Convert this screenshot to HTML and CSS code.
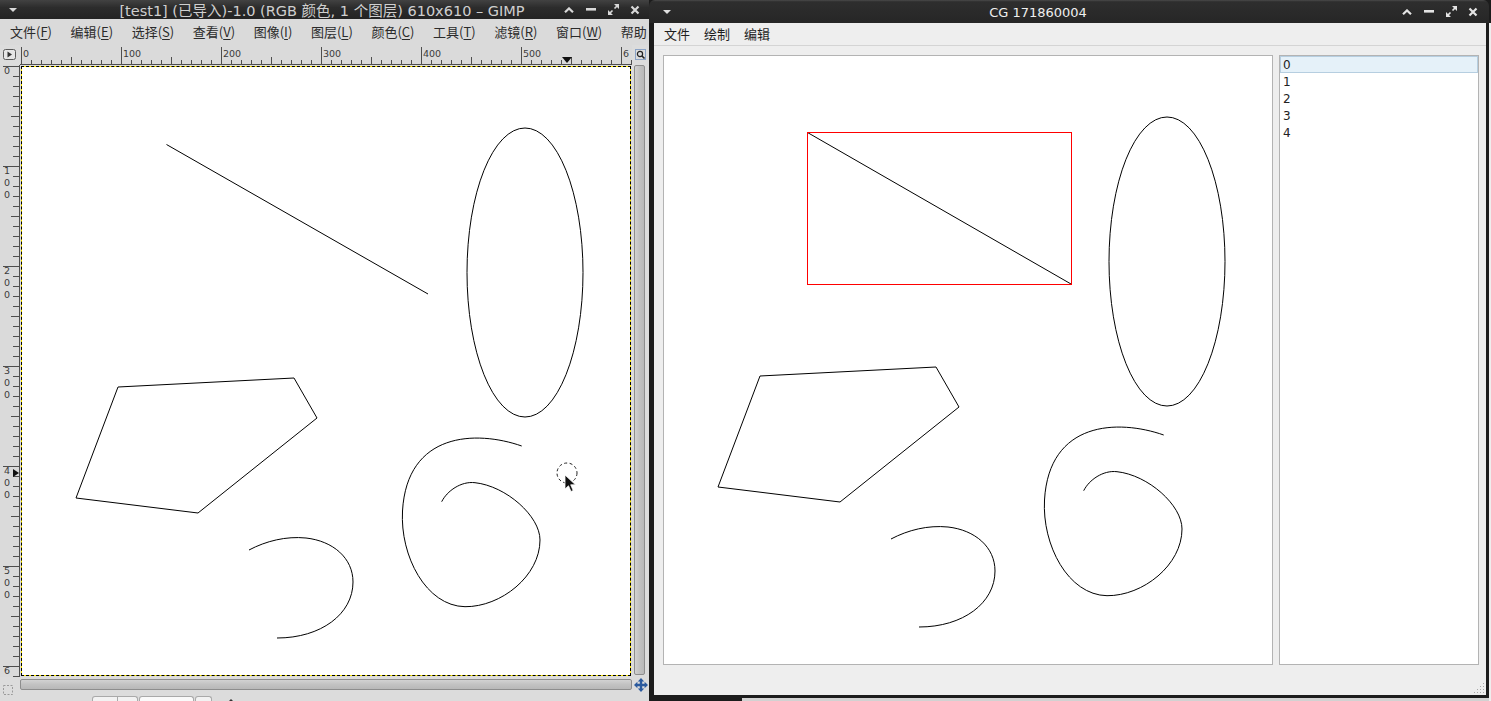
FILE: index.html
```html
<!DOCTYPE html>
<html lang="zh">
<head>
<meta charset="utf-8">
<title>GIMP and CG</title>
<link rel="stylesheet" href="styles.css">
</head>
<body>
<div class="desk-strip"></div>
<div class="desk-edge"></div>

<div class="win gimp">
  <div class="titlebar">
    <div class="tb-menu"><svg width="8" height="4" viewBox="0 0 8 4"><path d="M0 0H8L4 4Z" fill="#d8d8d8"/></svg></div>
    <div class="title">[test1] (已导入)-1.0 (RGB 颜色, 1 个图层) 610x610 – GIMP</div>
    <div class="tb-btns">
      <div class="tb-btn"><svg width="10" height="6" viewBox="0 0 10 6"><path d="M1 5.2 L5 1.4 L9 5.2" stroke="#d8d8d8" stroke-width="2.2" fill="none"/></svg></div>
      <div class="tb-btn"><svg width="10" height="3" viewBox="0 0 10 3"><rect width="10" height="2.6" fill="#d8d8d8"/></svg></div>
      <div class="tb-btn"><svg width="11" height="11" viewBox="0 0 11 11"><path d="M6 0H11V5Z M0 6V11H5Z" fill="#d8d8d8"/><path d="M9.5 1.5L6.5 4.5 M1.5 9.5L4.5 6.5" stroke="#d8d8d8" stroke-width="1.6"/></svg></div>
      <div class="tb-btn"><svg width="10" height="10" viewBox="0 0 10 10"><path d="M1.5 1.5L8.5 8.5M8.5 1.5L1.5 8.5" stroke="#d8d8d8" stroke-width="2.2"/></svg></div>
    </div>
  </div>

  <div class="gmenu">
    <span>文件(<u>F</u>)</span>
    <span>编辑(<u>E</u>)</span>
    <span>选择(<u>S</u>)</span>
    <span>查看(<u>V</u>)</span>
    <span>图像(<u>I</u>)</span>
    <span>图层(<u>L</u>)</span>
    <span>颜色(<u>C</u>)</span>
    <span>工具(<u>T</u>)</span>
    <span>滤镜(<u>R</u>)</span>
    <span>窗口(<u>W</u>)</span>
    <span>帮助</span>
  </div>

  <div class="gmain">
    <div class="corner">
      <svg width="14" height="12" viewBox="0 0 14 12"><rect x="0.5" y="0.5" width="12" height="10" rx="2" fill="#e6e6e6" stroke="#5a5a5a"/><path d="M4.5 2.5 L9 5.5 L4.5 8.5Z" fill="#333"/></svg>
    </div>
    <div class="hruler">
      <span>0</span><span>100</span><span>200</span><span>300</span><span>400</span><span>500</span><span class="last">6</span>
      <i class="hmark"></i>
    </div>
    <div class="zoombtn">
      <svg width="11" height="11" viewBox="0 0 11 11"><rect x="0.5" y="0.5" width="10" height="10" fill="none" stroke="#3b6bb0" stroke-dasharray="1 1"/><circle cx="5" cy="5" r="2.6" fill="none" stroke="#222" stroke-width="1.2"/><path d="M7 7L9.5 9.5" stroke="#222" stroke-width="1.6"/></svg>
    </div>

    <div class="vruler">
      <div class="vl"><b>0</b></div>
      <div class="vl"><b>1</b><b>0</b><b>0</b></div>
      <div class="vl"><b>2</b><b>0</b><b>0</b></div>
      <div class="vl"><b>3</b><b>0</b><b>0</b></div>
      <div class="vl"><b>4</b><b>0</b><b>0</b></div>
      <div class="vl"><b>5</b><b>0</b><b>0</b></div>
      <div class="vl"><b>6</b></div>
      <i class="vmark"></i>
    </div>
    <div class="gcanvas">
      <div class="image">
        <svg width="608" height="608" viewBox="1 1 608 608" class="art">
          <g fill="none" stroke="#000" stroke-width="1">
            <path d="M145.5 78.5 L407 228"/>
            <ellipse cx="504" cy="206.5" rx="58" ry="144.5"/>
            <polygon points="97,321 273,312 296,352 177,447 55,432"/>
            <path d="M500.7 380 C455 364 386 366 381.5 445 C379 490 405 540 444 540.7 C480 541 519 510 519 474 C519 450 485 420 454 416.7 C440 415 426 425 420.7 435.7"/>
            <path d="M228 484 C245 475 265 470 285 472 C312 475 332 492 332 516 C332 548 300 572 256 572"/>
          </g>
          <circle cx="546" cy="407" r="10" fill="none" stroke="#222" stroke-dasharray="3 2.5"/>
          <path d="M544 409 L544 423 L547.5 419.8 L550 425.5 L552.2 424.5 L549.7 418.8 L554.5 418.8 Z" fill="#111" stroke="#fff" stroke-width="0.8"/>
        </svg>
      </div>
    </div>
    <div class="vscroll-cell"><div class="vscroll"></div></div>

    <div class="qmask">
      <svg width="11" height="11" viewBox="0 0 11 11"><rect x="0.5" y="0.5" width="9" height="9" fill="none" stroke="#9a9a9a" stroke-dasharray="2 1.5"/></svg>
    </div>
    <div class="hscroll-cell"><div class="hscroll"></div></div>
    <div class="nav">
      <svg width="14" height="14" viewBox="0 0 14 14"><path d="M7 0 L10.2 3.4 H8.2 V5.8 H10.6 V3.8 L14 7 L10.6 10.2 V8.2 H8.2 V10.6 H10.2 L7 14 L3.8 10.6 H5.8 V8.2 H3.4 V10.2 L0 7 L3.4 3.8 V5.8 H5.8 V3.4 H3.8 Z" fill="#2b5a9e"/></svg>
    </div>
  </div>

  <div class="gstatus">
    <div class="sbtn b1"><span></span></div>
    <div class="sbtn b2"></div>
    <div class="sbtn b3"></div>
    <div class="sarrow"></div>
  </div>
</div>

<div class="win cg">
  <div class="titlebar">
    <div class="tb-menu"><svg width="8" height="4" viewBox="0 0 8 4"><path d="M0 0H8L4 4Z" fill="#e0e0e0"/></svg></div>
    <div class="title">CG 171860004</div>
    <div class="tb-btns">
      <div class="tb-btn"><svg width="10" height="6" viewBox="0 0 10 6"><path d="M1 5.2 L5 1.4 L9 5.2" stroke="#e4e4e4" stroke-width="2.2" fill="none"/></svg></div>
      <div class="tb-btn"><svg width="10" height="3" viewBox="0 0 10 3"><rect width="10" height="2.6" fill="#e4e4e4"/></svg></div>
      <div class="tb-btn"><svg width="11" height="11" viewBox="0 0 11 11"><path d="M6 0H11V5Z M0 6V11H5Z" fill="#e4e4e4"/><path d="M9.5 1.5L6.5 4.5 M1.5 9.5L4.5 6.5" stroke="#e4e4e4" stroke-width="1.6"/></svg></div>
      <div class="tb-btn"><svg width="10" height="10" viewBox="0 0 10 10"><path d="M1.5 1.5L8.5 8.5M8.5 1.5L1.5 8.5" stroke="#e4e4e4" stroke-width="2.2"/></svg></div>
    </div>
  </div>
  <div class="client">
    <div class="cmenu">
      <span>文件</span><span>绘制</span><span>编辑</span>
    </div>
    <div class="cbody">
      <div class="panel cv">
        <svg width="608" height="608" viewBox="1 1 608 608" class="art">
          <g fill="none" stroke="#000" stroke-width="1">
            <path d="M144.5 77.5 L408 229"/>
            <ellipse cx="504" cy="206.5" rx="58" ry="144.5"/>
            <polygon points="97,321 273,312 296,352 177,447 55,432"/>
            <path d="M500.7 380 C455 364 386 366 381.5 445 C379 490 405 540 444 540.7 C480 541 519 510 519 474 C519 450 485 420 454 416.7 C440 415 426 425 420.7 435.7"/>
            <path d="M228 484 C245 475 265 470 285 472 C312 475 332 492 332 516 C332 548 300 572 256 572"/>
          </g>
          <rect x="144.5" y="77.5" width="264" height="152" fill="none" stroke="#ff0000"/>
        </svg>
      </div>
      <div class="panel list">
        <div class="item sel">0</div>
        <div class="item">1</div>
        <div class="item">2</div>
        <div class="item">3</div>
        <div class="item">4</div>
      </div>
    </div>
    <svg class="grip" width="12" height="12" viewBox="0 0 12 12">
      <g fill="#a8a8a8">
        <rect x="10" y="1" width="1" height="1"/>
        <rect x="7" y="4" width="1" height="1"/><rect x="10" y="4" width="1" height="1"/>
        <rect x="4" y="7" width="1" height="1"/><rect x="7" y="7" width="1" height="1"/><rect x="10" y="7" width="1" height="1"/>
        <rect x="1" y="10" width="1" height="1"/><rect x="4" y="10" width="1" height="1"/><rect x="7" y="10" width="1" height="1"/><rect x="10" y="10" width="1" height="1"/>
      </g>
    </svg>
  </div>
</div>
</body>
</html>
```

FILE: styles.css
```css
* { box-sizing: border-box; margin: 0; padding: 0; }
html, body { width: 1491px; height: 701px; overflow: hidden; }
body {
  position: relative;
  background: #1c1c1c;
  font-family: "DejaVu Sans", "Noto Sans CJK SC", sans-serif;
}

.desk-strip { position: absolute; left: 742px; top: 698px; right: 0; bottom: 0; background: #d2d2d2; }
.desk-edge { position: absolute; left: 1489px; top: 23px; right: 0; bottom: 0; background: #eeeeee; }

.win { position: absolute; top: 0; overflow: hidden; }

/* ---------- title bars ---------- */
.titlebar {
  flex: none;
  display: flex;
  align-items: center;
  background: linear-gradient(#424242, #2c2c2c 40%, #232323);
  color: #d4d4d4;
}
.tb-menu { width: 26px; flex: none; display: flex; justify-content: center; align-items: center; }
.title {
  flex: 1;
  text-align: center;
  font-size: 13px;
  white-space: nowrap;
  overflow: hidden;
}
.tb-btns { display: flex; flex: none; }
.tb-btn { width: 22px; display: flex; justify-content: center; align-items: center; }

/* ---------- GIMP window ---------- */
.gimp {
  left: 0;
  width: 649px;
  height: 701px;
  background: #dcdcdc;
  display: flex;
  flex-direction: column;
}
.gimp .titlebar { height: 19px; padding-right: 3px; }
.gimp .title { padding-left: 60px; padding-top: 2px; font-size: 14.5px; line-height: 18px; color: #cfcfcf; }
.gimp .tb-btn { height: 19px; }

.gmenu {
  flex: none;
  height: 26px;
  display: flex;
  padding-left: 0.7px;
  white-space: nowrap;
  overflow: hidden;
  font-family: "Noto Sans CJK SC", sans-serif;
  font-size: 13px;
  line-height: 26px;
  color: #2b2b2b;
  background: #dadada;
}
.gmenu span { flex: none; padding: 0 9.3px; }
.gmenu u { text-underline-offset: 2px; }

.gmain {
  flex: none;
  display: grid;
  grid-template-columns: 20px 612px 17px;
  grid-template-rows: 20px 612px 15px;
}

.corner { display: flex; padding: 4px 0 0 3px; }

.hruler {
  position: relative;
  overflow: hidden;
  display: flex;
  padding: 4px 0 0 3px;
  font-family: "DejaVu Sans", sans-serif;
  font-size: 9.5px;
  line-height: 10px;
  color: #3c3c3c;
  background:
    linear-gradient(#4e4e4e, #4e4e4e) 0 100% / 100% 1px no-repeat,
    repeating-linear-gradient(90deg, #4e4e4e 0 1px, transparent 1px 100px) 1px 2px / 100% 18px no-repeat,
    repeating-linear-gradient(90deg, #4e4e4e 0 1px, transparent 1px 50px) 1px 12px / 100% 7px no-repeat,
    repeating-linear-gradient(90deg, #4e4e4e 0 1px, transparent 1px 10px) 1px 15px / 100% 4px no-repeat,
    #dadada;
}
.hruler span { flex: none; width: 100px; }
.hruler span.last { width: auto; }
.hmark {
  position: absolute;
  left: 542px;
  top: 12px;
  width: 0;
  height: 0;
  border-left: 5.5px solid transparent;
  border-right: 5.5px solid transparent;
  border-top: 6px solid #111;
}

.zoombtn { display: flex; padding: 4px 0 0 3px; }

.vruler {
  position: relative;
  overflow: hidden;
  display: flex;
  flex-direction: column;
  font-family: "DejaVu Sans", sans-serif;
  font-size: 9.5px;
  line-height: 12px;
  color: #3c3c3c;
  background:
    linear-gradient(#4e4e4e, #4e4e4e) 19px 0 / 1px 100% no-repeat,
    repeating-linear-gradient(180deg, #4e4e4e 0 1px, transparent 1px 100px) 3px 1px / 16px 100% no-repeat,
    repeating-linear-gradient(180deg, #4e4e4e 0 1px, transparent 1px 50px) 11px 1px / 8px 100% no-repeat,
    repeating-linear-gradient(180deg, #4e4e4e 0 1px, transparent 1px 10px) 13px 1px / 6px 100% no-repeat,
    #dadada;
}
.vl { flex: none; height: 100px; padding: 0 0 0 4px; display: flex; flex-direction: column; }
.vl:last-of-type { height: auto; }
.vl b { font-weight: normal; display: block; }
.vmark {
  position: absolute;
  left: 13px;
  top: 404px;
  width: 0;
  height: 0;
  border-top: 4.5px solid transparent;
  border-bottom: 4.5px solid transparent;
  border-left: 6px solid #111;
}

.gcanvas { background: #dcdcdc; padding: 1px 0 0 1px; }
.image {
  width: 610px;
  height: 610px;
  border: 1px dashed #000;
  background-color: #ffe900;
}
.art { display: block; background: #fff; }

.vscroll-cell { padding: 0 0 2px 2px; }
.vscroll {
  width: 11px;
  height: 100%;
  border: 1px solid #8d8d8d;
  border-radius: 2px;
  background: linear-gradient(90deg, #d2d2d2, #c2c2c2 50%, #b8b8b8);
}

.qmask { padding: 4px 0 0 3px; }
.hscroll-cell { padding: 2px 0 0 0; }
.hscroll {
  height: 11px;
  border: 1px solid #8d8d8d;
  border-radius: 2px;
  background: linear-gradient(#d2d2d2, #c2c2c2 50%, #b8b8b8);
}
.nav { padding: 0 0 0 2px; }

.gstatus {
  flex: 1;
  display: flex;
  align-items: flex-start;
  padding: 4px 0 0 92px;
}
.sbtn {
  height: 14px;
  border: 1px solid #a9a9a9;
  border-bottom: 0;
  border-radius: 3px 3px 0 0;
  background: #f2f2f2;
}
.b1 { width: 46px; position: relative; }
.b1 span { position: absolute; left: 24px; top: 0; width: 1px; height: 100%; background: #a9a9a9; }
.b2 { width: 55px; margin-left: 1px; background: #fafafa; }
.b3 { width: 17px; margin-left: 1px; }
.sarrow { margin: 3px 0 0 16px; width: 0; height: 0; border-left: 3px solid transparent; border-right: 3px solid transparent; border-bottom: 3px solid #333; }

/* ---------- CG window ---------- */
.cg {
  left: 649px;
  width: 840px;
  height: 698px;
  display: flex;
  flex-direction: column;
  background: #1c1c1c;
  border-radius: 6px 6px 0 0;
}
.cg .titlebar { height: 23px; padding: 0 5px; background: linear-gradient(#4a4a4a, #2e2e2e 8%, #262626); }
.cg .title { padding-top: 2px; color: #efefef; }
.cg .tb-btn { height: 23px; }

.client {
  position: relative;
  flex: 1;
  margin: 0 3px 3px 5px;
  background: #eeeeee;
  display: flex;
  flex-direction: column;
}
.cmenu {
  flex: none;
  height: 23px;
  display: flex;
  padding-left: 3px;
  border-bottom: 1px solid #d4d4d4;
  font-family: "Noto Sans CJK SC", sans-serif;
  font-size: 13px;
  line-height: 22px;
  color: #1e1e1e;
}
.cmenu span { padding: 0 7px; }

.cbody { display: flex; gap: 6px; padding: 9px 7px 0 9px; }
.panel { flex: none; height: 610px; border: 1px solid #b3b3b3; background: #fff; }
.cv { width: 610px; }
.list { width: 200px; }
.item {
  height: 17px;
  border: 1px solid transparent;
  padding-left: 2px;
  font-family: "DejaVu Sans", sans-serif;
  font-size: 12px;
  line-height: 16px;
  color: #222;
}
.item.sel { background: #e5f1f9; border-color: #b6cee0; }

.grip { position: absolute; right: 1px; bottom: 1px; }
```
